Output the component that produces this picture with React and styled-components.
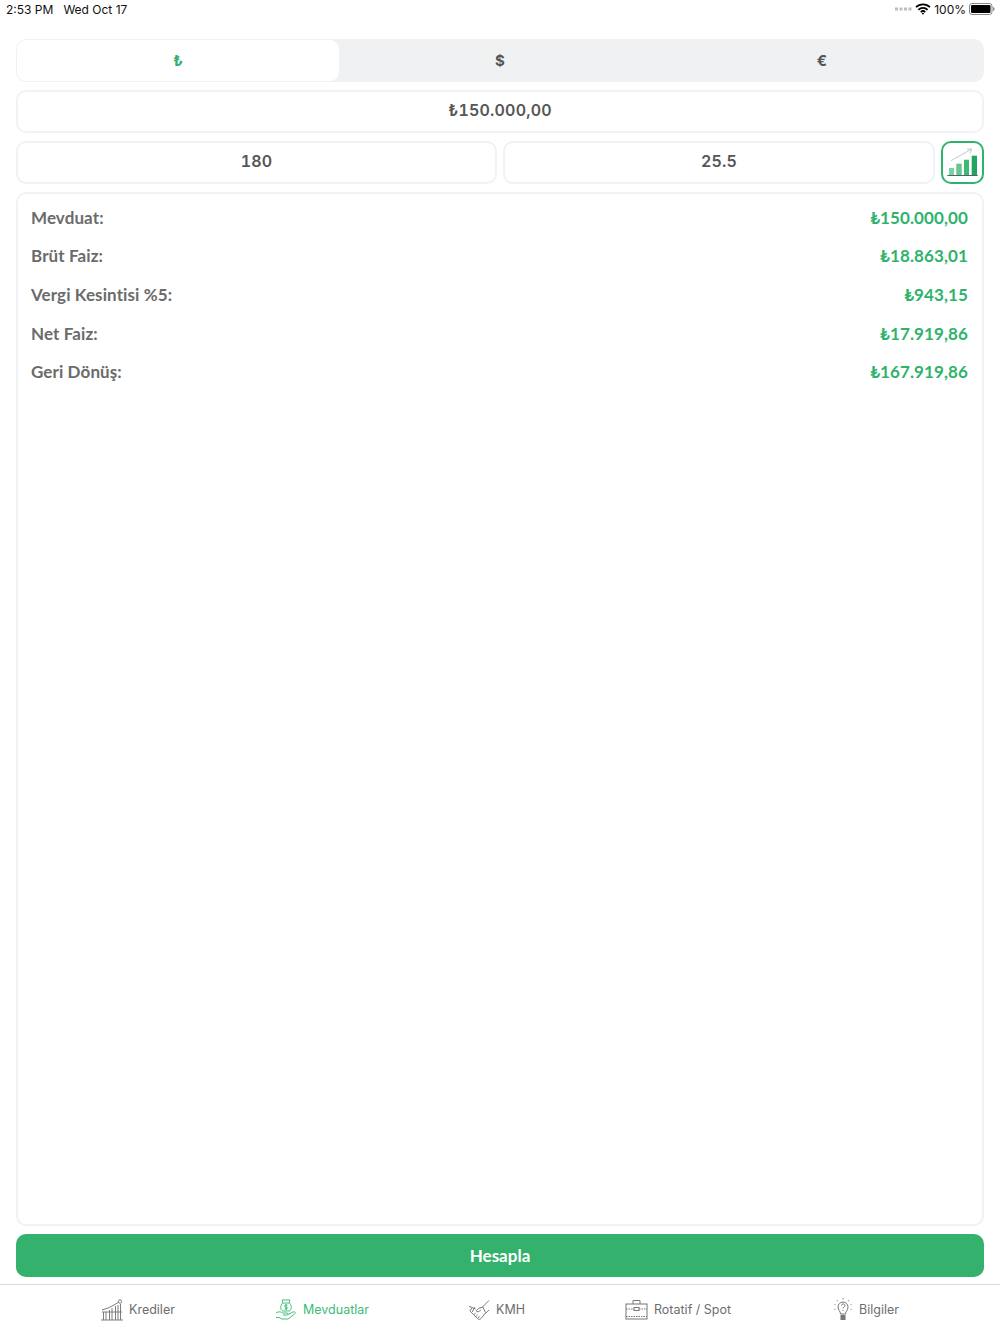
import styled, { createGlobalStyle } from "styled-components";

const GlobalStyle = createGlobalStyle`
    html, body {
        margin: 0;
        padding: 0;
        background: #fff;
    }
    body {
        font-family: Inter, "Noto Sans", sans-serif;
    }
`;

const Page = styled.div`
    width: 1000px;
    height: 1334px;
    display: flex;
    flex-direction: column;
    overflow: hidden;
`;

const StatusBar = styled.div`
    height: 18px;
    margin-bottom: 2px;
    display: flex;
    align-items: center;
    justify-content: space-between;
    padding: 0 5px 0 6px;
    font-size: 12px;
    color: #111;
    flex: none;
`;

const StatusLeft = styled.div`
    display: flex;
    gap: 10px;
`;

const StatusRight = styled.div`
    display: flex;
    align-items: center;
    gap: 3px;
`;

const Content = styled.div`
    flex: 1;
    min-height: 0;
    display: flex;
    flex-direction: column;
    gap: 8px;
    padding: 19px 16px 7px;
`;

const Segments = styled.div`
    height: 43px;
    box-sizing: border-box;
    padding: 1px;
    display: grid;
    grid-template-columns: repeat(3, 1fr);
    background: #f0f1f3;
    border-radius: 10px;
    flex: none;
`;

const Segment = styled.div`
    display: flex;
    align-items: center;
    justify-content: center;
    font-size: 15px;
    font-weight: 700;
    color: ${(props) => (props.$active ? "#2fb36c" : "#555")};
    background: ${(props) => (props.$active ? "#fff" : "transparent")};
    border-radius: 9px;
`;

const InputRow = styled.div`
    display: flex;
    gap: 6px;
    flex: none;
`;

const Field = styled.div`
    flex: none;
    width: ${(props) => props.$width || "100%"};
    height: 43px;
    box-sizing: border-box;
    padding-bottom: 3px;
    display: flex;
    align-items: center;
    justify-content: center;
    border: 2px solid #f1f2f3;
    border-radius: 10px;
    font-size: 16px;
    font-weight: 600;
    font-variant-numeric: tabular-nums;
    letter-spacing: 0.2px;
    color: #565656;
`;

const ChartButton = styled.div`
    width: 43px;
    height: 43px;
    box-sizing: border-box;
    border: 2px solid #2fb36c;
    border-radius: 10px;
    display: flex;
    align-items: center;
    justify-content: center;
    flex: none;
`;

const ResultCard = styled.div`
    flex: 1;
    min-height: 0;
    box-sizing: border-box;
    border: 2px solid #f1f2f3;
    border-radius: 10px;
    padding: 4px 14px 0 13px;
`;

const ResultRow = styled.div`
    height: 38.6px;
    display: flex;
    align-items: center;
    justify-content: space-between;
    font-family: Lato, Inter, sans-serif;
    font-size: 17px;
    font-weight: 700;
    letter-spacing: 0.1px;
`;

const ResultLabel = styled.span`
    color: #6b6b6b;
`;

const ResultValue = styled.span`
    color: #2fb36c;
`;

const SubmitButton = styled.div`
    height: 43px;
    flex: none;
    background: #33b16d;
    border-radius: 10px;
    display: flex;
    align-items: center;
    justify-content: center;
    color: #fff;
    font-family: Lato, Inter, sans-serif;
    font-size: 17px;
    font-weight: 700;
`;

const TabBar = styled.div`
    height: 50px;
    box-sizing: border-box;
    flex: none;
    border-top: 1px solid #d9d9d9;
    padding-left: 101px;
    display: grid;
    grid-template-columns: 174px 193px 157px 208px 1fr;
`;

const Tab = styled.div`
    display: flex;
    align-items: center;
    gap: 6px;
    font-size: 12.5px;
    color: ${(props) => (props.$active ? "#3dbb78" : "#6e6e6e")};
`;

const results = [
    ["Mevduat:", "₺150.000,00"],
    ["Brüt Faiz:", "₺18.863,01"],
    ["Vergi Kesintisi %5:", "₺943,15"],
    ["Net Faiz:", "₺17.919,86"],
    ["Geri Dönüş:", "₺167.919,86"],
];

const WifiIcon = () => (
    <svg width="16" height="12" viewBox="0 0 16 12" fill="none" stroke="#000" strokeWidth="1.8">
        <path d="M1 4.2a10 10 0 0 1 14 0" />
        <path d="M3.4 6.8a6.6 6.6 0 0 1 9.2 0" />
        <path d="M5.8 9.1a3.2 3.2 0 0 1 4.4 0" />
        <path d="M8 11.8 6.8 10.4a1.8 1.8 0 0 1 2.4 0z" fill="#000" stroke="none" />
    </svg>
);

const SignalDots = () => (
    <svg width="17" height="4" viewBox="0 0 17 4" fill="#bdbdbd">
        <rect x="0" y="0.5" width="3" height="3" />
        <rect x="4.5" y="0.5" width="3" height="3" />
        <rect x="9" y="0.5" width="3" height="3" />
        <rect x="13.5" y="0.5" width="3" height="3" />
    </svg>
);

const BatteryIcon = () => (
    <svg width="26" height="12" viewBox="0 0 26 12">
        <rect x="0.5" y="0.5" width="22.5" height="11" rx="2.5" fill="none" stroke="#888" />
        <rect x="2" y="2" width="19.5" height="8" rx="1.2" fill="#000" />
        <path d="M24 4v4c1-.2 1.6-1 1.6-2S25 4.200 24 4z" fill="#888" />
    </svg>
);

const ChartIcon = () => (
    <svg width="33" height="29" viewBox="0 0 33 29">
        <path d="M5 12.700 25.700 1" stroke="#c4c8cc" strokeWidth="1" fill="none" />
        <path d="M21 1H25.700L24 5.300" stroke="#c4c8cc" strokeWidth="1" fill="none" />
        <rect x="3" y="20" width="5" height="7" fill="#7dd09f" />
        <rect x="10.300" y="15.700" width="5.400" height="11.300" fill="#66c58d" />
        <rect x="18" y="11.700" width="5" height="15.300" fill="#3fb874" />
        <rect x="25.700" y="7.700" width="5.300" height="19.300" fill="#24a45e" />
        <rect x="1.300" y="27" width="30.400" height="1" fill="#55606a" />
    </svg>
);

const KredilerIcon = () => (
    <svg width="22" height="22" viewBox="0 0 22 22" fill="none" stroke="#7c7c7c" strokeWidth="1">
        <path d="M1 11 7 9l6-3 5-3" />
        <circle cx="19" cy="2.500" r="1.700" />
        <path d="M1 13h20M0 21h22" />
        <path d="M2.500 13v8M5 13v8M8.500 11v10M11 9v12M14.500 7v14M17 6v15M19.500 5v16" />
    </svg>
);

const MevduatIcon = () => (
    <svg width="22" height="22" viewBox="0 0 22 22" fill="none" stroke="#45be7d" strokeWidth="1">
        <path d="M7 1h8l-1 3H8z" />
        <path d="M7.500 4C5 7 5 11 8 12h6c3-1 3-5 .5-8" />
        <path d="M12.500 6H10v2h2v2H9.500M11 5v6" />
        <path d="M1 14c3-2 5-1 7 0h4c1.500 0 1.500 2 0 2H8" />
        <path d="M13 15.500l5-2.500c2-.8 3 .8 1.500 2L13 20H7l-3-1.500H1" />
    </svg>
);

const KmhIcon = () => (
    <svg width="22" height="22" viewBox="0 0 23 22" fill="none" stroke="#777" strokeWidth="1">
        <path d="M22 1 14 9M1 7l7 3" />
        <path d="M4 9 2 12l8 8c1 1 2.500 1 3.500 0l5-6-3-6-4 1-3 3 2 1 3-2" />
        <path d="M7 8 4.500 13M6 16l2-2M8 18l2-2M10.500 19.500l1.500-2" />
        <path d="M19 14l3-3" />
    </svg>
);

const BriefcaseIcon = () => (
    <svg width="23" height="21" viewBox="0 0 23 21" fill="none" stroke="#777" strokeWidth="1">
        <rect x="1" y="5" width="21" height="15" />
        <path d="M8 5V1.500h7V5" />
        <path d="M1 10h8M14 10h8" strokeDasharray="1.500 1" />
        <rect x="9" y="8.500" width="5" height="3" />
        <path d="M1 17.500h21" strokeDasharray="1.500 1" />
    </svg>
);

const BulbIcon = () => (
    <svg width="20" height="23" viewBox="-1 0 20 23" fill="none" stroke="#777" strokeWidth="1">
        <path d="M6.500 16c0-3-2.500-3.500-2.500-7a5 5 0 0 1 10 0c0 3.500-2.500 4-2.500 7z" />
        <rect x="6.500" y="17" width="5" height="5" fill="#777" stroke="none" />
        <path d="M7.500 7.500c0-2 3.500-2 3.500 0 0 1.500-2 1.500-2 3M9 12v1" />
        <path d="M9 0v2M3 2l1 1.500M15 2l-1 1.500M0.500 6.500 2 7M17.500 6.500 16 7M0.500 11.500 2 11M17.500 11.500 16 11" strokeDasharray="1 .6" />
    </svg>
);

const App = () => {
    return (
        <Page>
            <GlobalStyle />
            <StatusBar>
                <StatusLeft>
                    <span>2:53 PM</span>
                    <span>Wed Oct 17</span>
                </StatusLeft>
                <StatusRight>
                    <SignalDots />
                    <WifiIcon />
                    <span>100%</span>
                    <BatteryIcon />
                </StatusRight>
            </StatusBar>
            <Content>
                <Segments>
                    <Segment $active>₺</Segment>
                    <Segment>$</Segment>
                    <Segment>€</Segment>
                </Segments>
                <Field>₺150.000,00</Field>
                <InputRow>
                    <Field $width="481px">180</Field>
                    <Field $width="432px">25.5</Field>
                    <ChartButton>
                        <ChartIcon />
                    </ChartButton>
                </InputRow>
                <ResultCard>
                    {results.map(([label, value]) => (
                        <ResultRow key={label}>
                            <ResultLabel>{label}</ResultLabel>
                            <ResultValue>{value}</ResultValue>
                        </ResultRow>
                    ))}
                </ResultCard>
                <SubmitButton>Hesapla</SubmitButton>
            </Content>
            <TabBar>
                <Tab>
                    <KredilerIcon />
                    Krediler
                </Tab>
                <Tab $active>
                    <MevduatIcon />
                    Mevduatlar
                </Tab>
                <Tab>
                    <KmhIcon />
                    KMH
                </Tab>
                <Tab>
                    <BriefcaseIcon />
                    Rotatif / Spot
                </Tab>
                <Tab>
                    <BulbIcon />
                    Bilgiler
                </Tab>
            </TabBar>
        </Page>
    );
};

export default App;
